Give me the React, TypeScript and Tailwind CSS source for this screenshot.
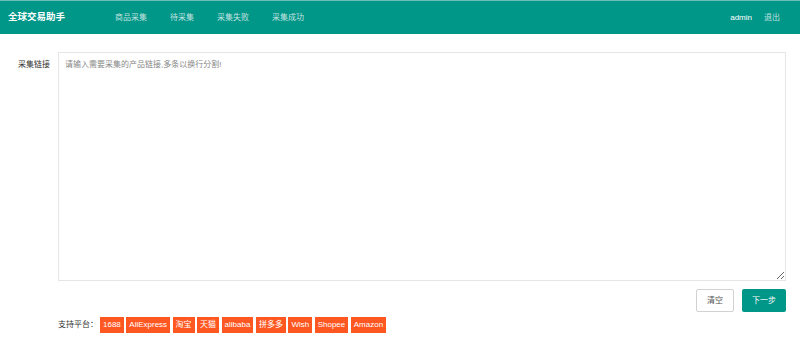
import { useState } from 'react'

const NAV = ['商品采集', '待采集', '采集失败', '采集成功']
const PLATFORMS = ['1688', 'AliExpress', '淘宝', '天猫', 'alibaba', '拼多多', 'Wish', 'Shopee', 'Amazon']

const App = () => {
  const [links, setLinks] = useState('')

  return (
    <div className="min-h-[356px] bg-white text-[#333] font-['Liberation_Sans','Noto_Sans_CJK_SC',sans-serif]">
      {/* Header */}
      <div className="h-[34px] bg-[#009688] border-t border-[#6bbfb7] flex items-center">
        <div className="w-[115px] pl-2 text-[9.5px] font-bold text-white">全球交易助手</div>
        <nav className="flex items-center gap-[23px]">
          {NAV.map(n => (
            <a key={n} className="text-[8px] text-white/75 cursor-pointer">{n}</a>
          ))}
        </nav>
        <div className="ml-auto pr-5 flex items-center gap-3 text-[8px]">
          <span className="text-white">admin</span>
          <a className="text-white/75 cursor-pointer">退出</a>
        </div>
      </div>

      {/* Form */}
      <div className="pt-[18px] pr-[14px]">
        <div className="flex">
          <label className="w-[58px] pr-2 pt-[7px] text-right text-[8px] text-[#333]">采集链接</label>
          <textarea
            value={links}
            onChange={e => setLinks(e.target.value)}
            placeholder="请输入需要采集的产品链接,多条以换行分割!"
            className="flex-1 h-[229px] border border-[#e6e6e6] px-[6px] py-[5px] text-[8px] leading-[14px] outline-none placeholder:text-[#888]"
          />
        </div>

        <div className="flex justify-end gap-2 mt-2">
          <button className="w-[38px] h-[23px] border border-[#d2d2d2] rounded-[2px] bg-white text-[8px] text-[#555]">清空</button>
          <button className="w-[44px] h-[23px] rounded-[2px] bg-[#009688] text-[8px] text-white">下一步</button>
        </div>

        <div className="flex items-center pl-[58px] mt-[5px]">
          <span className="w-[42px] text-[8px] text-[#333]">支持平台：</span>
          <div className="flex gap-[2.5px]">
            {PLATFORMS.map(p => (
              <span key={p} className="h-4 px-[3px] flex items-center bg-[#ff5722] text-white text-[8px]">{p}</span>
            ))}
          </div>
        </div>
      </div>
    </div>
  )
}

export default App
